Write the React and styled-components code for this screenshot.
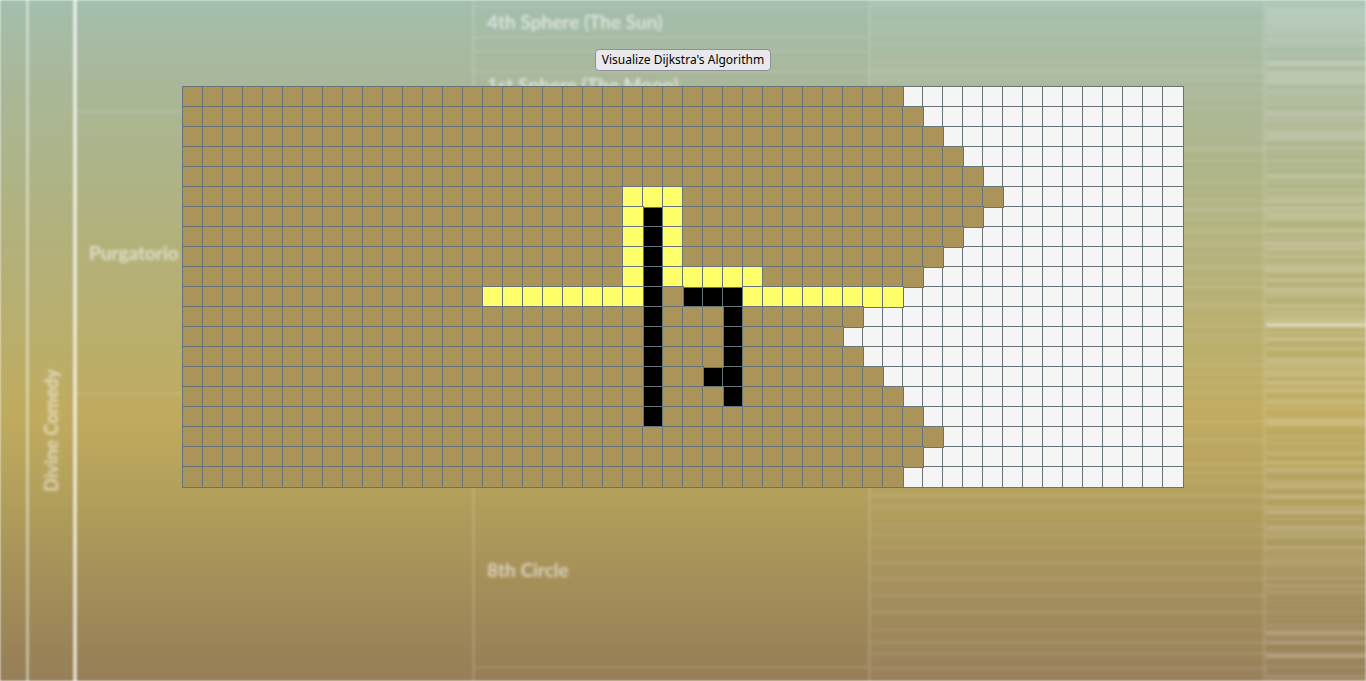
import React from "react";
import styled, { createGlobalStyle, css } from "styled-components";

const GlobalStyle = createGlobalStyle`
  * { box-sizing: border-box; }
  body {
    margin: 0;
    background: #ffffff;
    font-family: "Noto Sans", "Open Sans", sans-serif;
  }
`;

/* ---------- backdrop: a softened partition chart ---------- */

const CHART_UNITS = 681;

const bands = (list) => {
  const pct = (v) => `${((v / CHART_UNITS) * 100).toFixed(3)}%`;
  const stops = list.flatMap(([start, size, alpha]) => [
    `rgba(255, 255, 255, 0.02) ${pct(start)}`,
    `rgba(255, 255, 255, ${alpha}) ${pct(start)}`,
    `rgba(255, 255, 255, ${alpha}) ${pct(start + size)}`,
    `rgba(255, 255, 255, 0.02) ${pct(start + size)}`,
  ]);
  return `linear-gradient(to bottom, ${stops.join(", ")})`;
};

const Backdrop = styled.div`
  position: fixed;
  inset: 0;
  z-index: 0;
  display: grid;
  grid-template-columns: 29fr 48fr 398fr 396fr 395fr 100fr;
  overflow: hidden;
  filter: blur(1px);
  background: linear-gradient(
    to bottom,
    #a2bfad 0%,
    #a9b89b 11%,
    #b0b382 29%,
    #baae6c 50%,
    #c0ab5e 61%,
    #b29f5b 73%,
    #a28c59 88%,
    #967e57 100%
  );
`;

const lines = {
  none: "0",
  strong: "4px solid rgba(255, 255, 255, 0.66)",
  medium: "3px solid rgba(255, 255, 255, 0.42)",
  faint: "3px solid rgba(255, 255, 255, 0.12)",
};

const Column = styled.div`
  min-width: 0;
  height: 100%;
  border-right: ${(p) => lines[p.$edge]};
  ${(p) =>
    p.$bands &&
    css`
      background: ${bands(p.$bands)};
      filter: blur(1px);
    `}
`;

const Segment = styled.div`
  display: flex;
  align-items: center;
  justify-content: ${(p) => (p.$upright ? "center" : "flex-start")};
  height: calc(100% * ${(p) => p.$size} / ${CHART_UNITS});
  padding-left: ${(p) => (p.$upright ? "0" : "12px")};
  border-bottom: ${(p) => (p.$line ? "3px solid rgba(255, 255, 255, 0.08)" : "0")};
`;

const Label = styled.span`
  font-family: Lato, "Open Sans", sans-serif;
  font-size: ${(p) => (p.$upright ? "18px" : "19px")};
  line-height: 20px;
  font-weight: 700;
  white-space: nowrap;
  color: rgba(255, 255, 255, 0.6);
  filter: blur(1px);
  ${(p) =>
    p.$upright &&
    css`
      writing-mode: vertical-rl;
      transform: rotate(180deg);
    `}
`;

const CANTO_BANDS = [
  [0, 9, 0.1], [11, 3, 0.08], [16, 2, 0.06], [21, 3, 0.07], [26, 3, 0.06],
  [31, 3, 0.08], [36, 3, 0.06], [42, 4, 0.08], [48, 3, 0.06], [53, 2, 0.08],
  [58, 7, 0.07], [67, 8, 0.1], [78, 4, 0.09], [88, 3, 0.08], [95, 4, 0.07],
  [106, 3, 0.07], [114, 2, 0.06], [120, 2, 0.06], [127, 2, 0.06], [135, 3, 0.05],
  [147, 4, 0.12], [159, 3, 0.07], [174, 2, 0.05], [181, 3, 0.09], [192, 2, 0.07],
  [199, 3, 0.08], [207, 5, 0.11], [217, 3, 0.08], [227, 7, 0.08], [241, 5, 0.09],
  [253, 3, 0.08], [265, 5, 0.09], [278, 3, 0.09], [285, 4, 0.09], [303, 4, 0.1],
  [317, 2, 0.07], [324, 3, 0.07], [335, 3, 0.08], [341, 2, 0.08], [356, 2, 0.09],
  [363, 4, 0.08], [372, 3, 0.06], [381, 2, 0.09], [391, 3, 0.09], [420, 3, 0.09],
  [439, 3, 0.09], [462, 4, 0.09], [471, 3, 0.09], [479, 4, 0.09], [494, 3, 0.1],
  [506, 3, 0.1], [524, 3, 0.08], [533, 3, 0.1], [546, 3, 0.08], [561, 3, 0.1],
  [577, 3, 0.1], [594, 3, 0.1], [611, 3, 0.1], [629, 3, 0.08], [641, 3, 0.1],
  [652, 3, 0.1], [667, 3, 0.1],
];

const VERSE_BANDS = [
  [1, 7, 0.14], [8, 17, 0.22], [25, 10, 0.18], [36, 7, 0.18], [44, 3, 0.18],
  [50, 3, 0.12], [54, 3, 0.14], [60, 7, 0.23], [70, 2, 0.18], [72, 13, 0.21],
  [88, 8, 0.13], [98, 3, 0.13], [103, 3, 0.16], [110, 7, 0.18], [119, 3, 0.18],
  [125, 3, 0.13], [130, 11, 0.2], [146, 4, 0.16], [153, 2, 0.1], [160, 2, 0.17],
  [166, 3, 0.1], [174, 5, 0.19], [182, 2, 0.12], [189, 2, 0.21], [194, 3, 0.14],
  [198, 5, 0.2], [206, 4, 0.19], [211, 10, 0.18], [228, 5, 0.18], [236, 3, 0.12],
  [241, 5, 0.22], [247, 4, 0.2], [254, 4, 0.16], [262, 2, 0.14], [265, 8, 0.21],
  [278, 4, 0.2], [287, 7, 0.19], [295, 3, 0.13], [304, 3, 0.2], [309, 9, 0.13],
  [318, 4, 0.22], [323, 4, 0.55], [331, 3, 0.14], [337, 4, 0.22], [347, 3, 0.18],
  [358, 5, 0.22], [364, 4, 0.17], [370, 7, 0.17], [381, 4, 0.2], [388, 5, 0.18],
  [399, 5, 0.16], [407, 3, 0.12], [418, 8, 0.2], [436, 2, 0.12], [442, 2, 0.13],
  [447, 2, 0.1], [452, 3, 0.18], [461, 3, 0.2], [467, 6, 0.17], [480, 2, 0.17],
  [483, 6, 0.19], [494, 5, 0.2], [505, 5, 0.16], [511, 3, 0.28], [518, 2, 0.14],
  [525, 7, 0.18], [533, 6, 0.14], [546, 3, 0.22], [551, 2, 0.12], [555, 3, 0.12],
  [559, 7, 0.12], [567, 2, 0.12], [571, 2, 0.12], [576, 4, 0.14], [584, 3, 0.18],
  [589, 6, 0.11], [599, 2, 0.08], [604, 2, 0.08], [611, 3, 0.1], [618, 2, 0.1],
  [624, 3, 0.12], [630, 6, 0.2], [641, 3, 0.24], [653, 5, 0.25], [665, 3, 0.1],
  [674, 6, 0.12],
];

/* ---------- pathfinding board ---------- */

const COLUMNS = 50;
const VISITED_PER_ROW = [
  36, 37, 38, 39, 40, 41, 40, 39, 38, 37, 36, 34, 33, 34, 35, 36, 37, 38, 37, 36,
];

const range = (from, to) => Array.from({ length: to - from + 1 }, (_, i) => from + i);
const key = (row, col) => `${row}:${col}`;

const WALLS = new Set([
  ...range(6, 16).map((row) => key(row, 23)),
  ...range(25, 27).map((col) => key(10, col)),
  ...range(11, 15).map((row) => key(row, 27)),
  key(14, 26),
]);

const PATH = new Set([
  ...range(15, 22).map((col) => key(10, col)),
  ...range(5, 9).map((row) => key(row, 22)),
  key(5, 23),
  ...range(5, 9).map((row) => key(row, 24)),
  ...range(25, 28).map((col) => key(9, col)),
  ...range(28, 35).map((col) => key(10, col)),
]);

const kindOf = (row, col) => {
  const id = key(row, col);
  if (WALLS.has(id)) return "wall";
  if (PATH.has(id)) return "path";
  return col < VISITED_PER_ROW[row] ? "visited" : "open";
};

const fills = {
  open: "#f5f5f5",
  wall: "#000000",
  visited: "#aa945a",
  path: "#ffff6a",
};

const Page = styled.main`
  position: relative;
  z-index: 1;
  display: flex;
  flex-direction: column;
  align-items: center;
  gap: 16px;
  padding: 49px 0 16px;
`;

const RunButton = styled.button`
  height: 22px;
  padding: 0 6px;
  border: 1px solid #8f8f9d;
  border-radius: 4px;
  background: #e9e9ed;
  color: #000000;
  font-family: "Noto Sans", "Open Sans", sans-serif;
  font-size: 12px;
  line-height: 20px;
  cursor: pointer;
`;

const Board = styled.div`
  display: grid;
  grid-template-columns: repeat(${COLUMNS}, 20px);
  grid-auto-rows: 20px;
`;

const Cell = styled.div`
  position: relative;
  z-index: ${(p) => (p.$kind === "visited" || p.$kind === "path" ? 1 : 0)};
  background: ${(p) => fills[p.$kind]};
  outline: 1px solid #667378;
`;

export default function App() {
  return (
    <>
      <GlobalStyle />
      <Backdrop aria-hidden="true">
        <Column $edge="medium" />
        <Column $edge="strong">
          <Segment $size={179} />
          <Segment $size={502} $upright>
            <Label $upright>Divine Comedy</Label>
          </Segment>
        </Column>
        <Column $edge="faint">
          <Segment $size={113} $line />
          <Segment $size={282} $line>
            <Label>Purgatorio</Label>
          </Segment>
          <Segment $size={286} />
        </Column>
        <Column $edge="faint">
          <Segment $size={8} $line />
          <Segment $size={31} $line>
            <Label>4th Sphere (The Sun)</Label>
          </Segment>
          <Segment $size={14} $line />
          <Segment $size={20} $line />
          <Segment $size={28} $line>
            <Label>1st Sphere (The Moon)</Label>
          </Segment>
          <Segment $size={373} />
          <Segment $size={195} $line>
            <Label>8th Circle</Label>
          </Segment>
          <Segment $size={12} />
        </Column>
        <Column $edge="faint" $bands={CANTO_BANDS} />
        <Column $edge="none" $bands={VERSE_BANDS} />
      </Backdrop>
      <Page>
        <RunButton type="button">Visualize Dijkstra's Algorithm</RunButton>
        <Board>
          {VISITED_PER_ROW.map((_, row) =>
            range(0, COLUMNS - 1).map((col) => (
              <Cell key={key(row, col)} $kind={kindOf(row, col)} />
            ))
          )}
        </Board>
      </Page>
    </>
  );
}
